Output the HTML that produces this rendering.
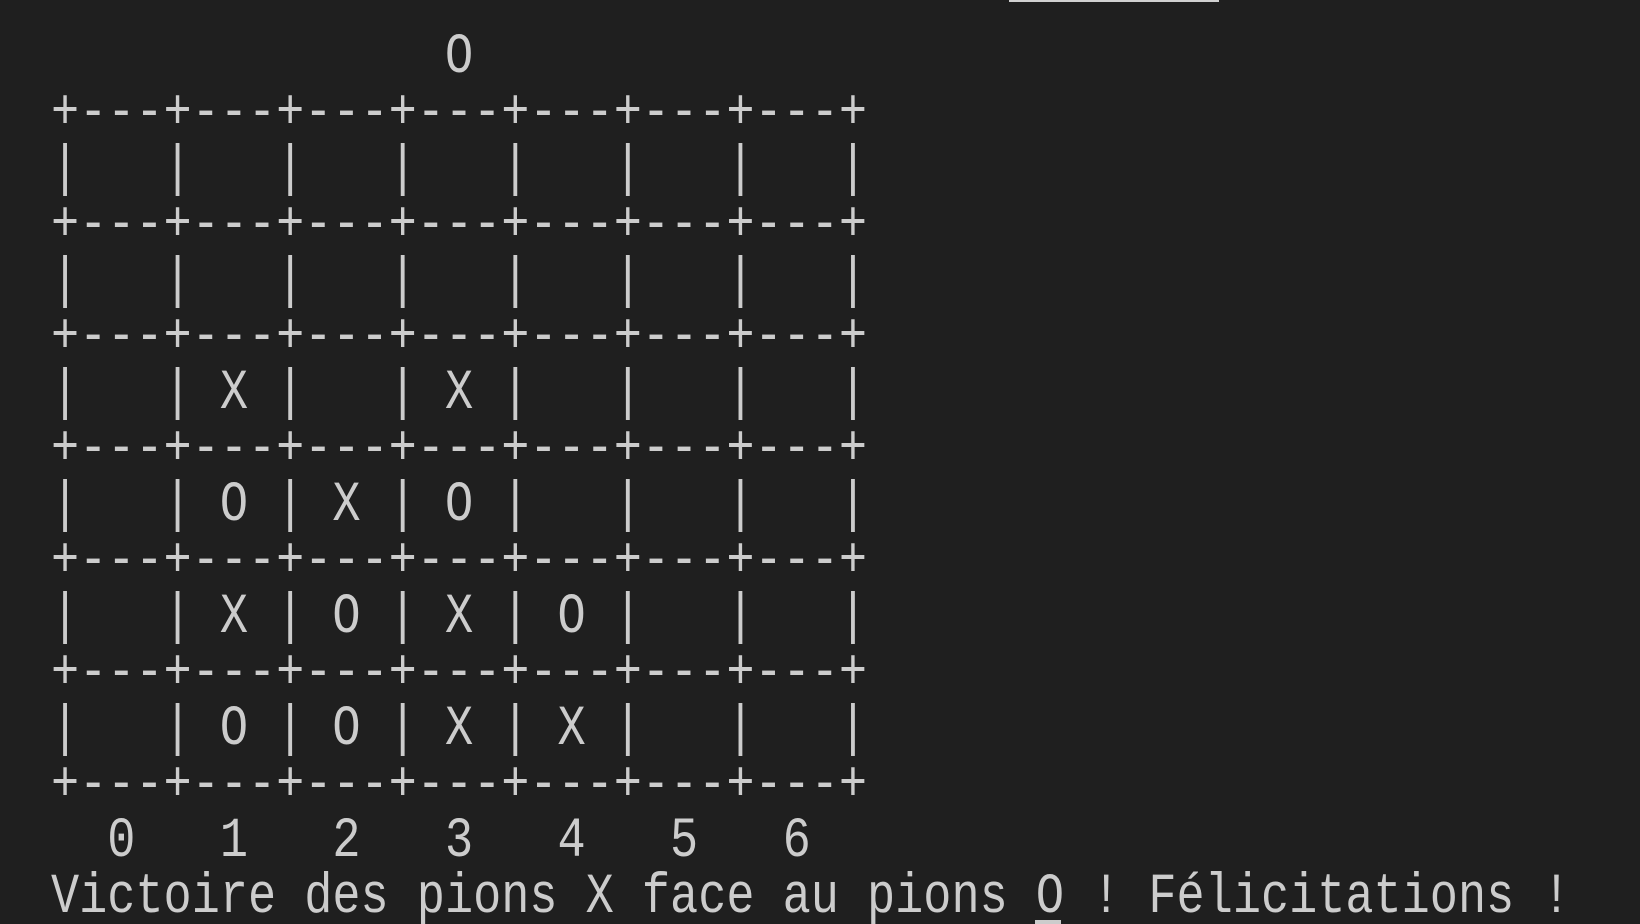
<!DOCTYPE html>
<html><head><meta charset="utf-8"><style>
html,body{margin:0;padding:0;background:#1f1f1f;width:1640px;height:924px;overflow:hidden;position:relative}
.l{position:absolute;left:51px;height:56px;line-height:56px;white-space:pre;font-family:"Liberation Mono","DejaVu Sans Mono",monospace;font-size:46.9px;color:#cccccc;transform:scaleY(1.2);transform-origin:left center}
.bar{position:absolute;left:1009px;top:0;width:210px;height:2px;background:#d0d0d0}
.cur{position:absolute;left:1035px;top:920px;width:26px;height:4px;background:#cccccc}
</style></head><body>
<div class="bar"></div>
<div class="l" style="top:31px">              O</div>
<div class="l" style="top:87px">+---+---+---+---+---+---+---+</div>
<div class="l" style="top:143px">|   |   |   |   |   |   |   |</div>
<div class="l" style="top:199px">+---+---+---+---+---+---+---+</div>
<div class="l" style="top:255px">|   |   |   |   |   |   |   |</div>
<div class="l" style="top:311px">+---+---+---+---+---+---+---+</div>
<div class="l" style="top:367px">|   | X |   | X |   |   |   |</div>
<div class="l" style="top:423px">+---+---+---+---+---+---+---+</div>
<div class="l" style="top:479px">|   | O | X | O |   |   |   |</div>
<div class="l" style="top:535px">+---+---+---+---+---+---+---+</div>
<div class="l" style="top:591px">|   | X | O | X | O |   |   |</div>
<div class="l" style="top:647px">+---+---+---+---+---+---+---+</div>
<div class="l" style="top:703px">|   | O | O | X | X |   |   |</div>
<div class="l" style="top:759px">+---+---+---+---+---+---+---+</div>
<div class="l" style="top:815px">  0   1   2   3   4   5   6</div>
<div class="l" style="top:871px">Victoire des pions X face au pions O ! Félicitations !</div>
<div class="cur"></div>
</body></html>
